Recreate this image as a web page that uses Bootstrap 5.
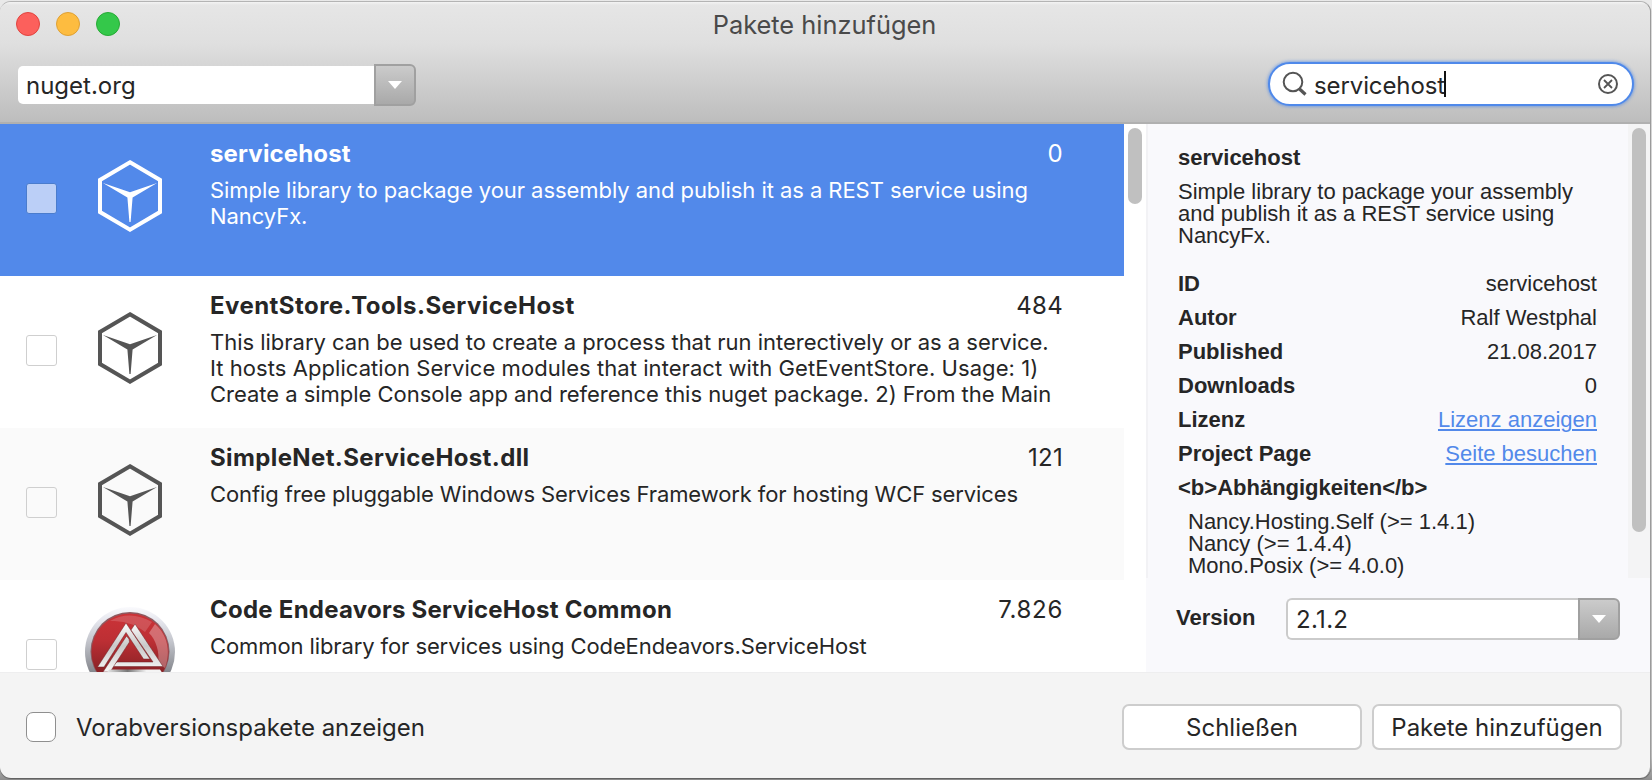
<!DOCTYPE html>
<html lang="de">
<head>
<meta charset="utf-8">
<title>Pakete hinzufügen</title>
<link href="https://cdn.jsdelivr.net/npm/bootstrap@5.3.0/dist/css/bootstrap.min.css" rel="stylesheet">
<style>
  html, body { height: 100%; }
  body { font-family: Inter, "Liberation Sans", sans-serif; color: #262626; background: linear-gradient(#e9e9e9, #c6c6c6 97%, #8e8e8e); overflow: hidden; padding-top: 1px; }
  .win { width: 1651px; height: 777px; background: #f4f4f4; border-radius: 11px; border-top: 1px solid #b4b4b4; border-right: 1px solid #9b9b9b; overflow: hidden; box-shadow: 0 1px 1px #5f5f5f; }
  .win-head { height: 122px; background: linear-gradient(#f4f4f4 0, #e6e6e6 3px, #dfdfdf 35%, #bdbdbd 100%); border-bottom: 2px solid #b0b0b0; padding: 8px 16px 0 18px; }
  .lights { margin-left: -2px; gap: 16px; width: 300px; margin-top: 2px; }
  .light { width: 24px; height: 24px; border: 1px solid; }
  .win-title { font-size: 25.4px; line-height: 30px; color: #4a4a4a; }
  .combo { height: 42px; font-size: 24px; }
  .combo-arrow { width: 42px; height: 42px; border: 2px solid #a0a0a0; border-radius: 0 6px 6px 0; background: linear-gradient(#cbcbcb, #a9a9a9); }
  .combo-src { width: 356px; height: 38px; background: #fff; border-radius: 5px 0 0 5px; line-height: 40px; padding-left: 8px; }
  .combo-ver { width: 292px; height: 42px; background: #fff; border: 2px solid #cbcbcb; border-right: 0; border-radius: 6px 0 0 6px; line-height: 39px; padding-left: 8px; letter-spacing: .3px; }
  .tools { margin-top: 24px; }
  .search { width: 366px; height: 44px; border: 2px solid #4f89ea; background: #fff; border-radius: 22px; font-size: 24px; box-shadow: 0 0 3px 1px rgba(79,137,234,.6); padding: 0 14px 0 11px; margin-top: -2px; }
  .search-text { line-height: 30px; margin: 3px 0 0 7px; letter-spacing: -.1px; }
  .caret-bar { width: 2px; height: 26px; background: #111; margin-left: -1px; }
  .main-area { height: 548px; }
  .pkg-list { width: 1124px; overflow: hidden; }
  .pkg { height: 152px; flex: none; padding-left: 26px; }
  .pkg.alt { background: #fafafa; }
  .pkg.active { background: #5289ea; color: #fff; }
  .tick { width: 31px; height: 31px; margin-top: 59px; border: 1px solid #cfcfcf; border-radius: 3px; background: #fff; flex: none; }
  .active .tick { background: #bbcff7; border-color: #4a7ccd; }
  .pkg-icon { width: 92px; height: 92px; margin: 26px 0 0 27px; flex: none; color: #555; }
  .active .pkg-icon { color: #fff; }
  .pkg-body { width: 853px; margin: 15px 0 0 34px; flex: none; }
  .pkg-name { font-size: 24px; line-height: 30px; font-weight: 700; letter-spacing: .25px; }
  .pkg-count { font-size: 24px; line-height: 30px; letter-spacing: .3px; }
  .pkg-desc { font-size: 22px; line-height: 26px; margin-top: 8px; white-space: nowrap; }
  .bar-l { width: 22px; padding: 4px 4px 0; background: #fff; }
  .thumb { width: 14px; border-radius: 7px; background: #c0c0c0; }
  .pane { width: 504px; background: #f9f9fc; font-family: "Liberation Sans", Arial, sans-serif; font-size: 22px; line-height: 22px; }
  .pane-body { height: 454px; border-left: 2px solid #f2f2f5; }
  .info { padding: 23px 31px 0 30px; }
  .info a { color: #5289ea; text-decoration-thickness: 1.5px; text-underline-offset: 2px; }
  .rows { margin-top: 26px; gap: 12px; }
  .bar-r { width: 22px; background: #f4f4f5; padding: 4px 4px 0; }
  .ver-row { padding: 20px 30px 0; }
  .ver-row .fw-bold { margin-top: 9px; }
  .ver-row .combo { font-family: Inter, sans-serif; }
  .foot { border-top: 1px solid #eeeeef; padding: 31px 28px 0 26px; height: 106px; font-size: 24px; }
  .foot-check { width: 30px; height: 30px; border: 1px solid #8f8f8f; border-radius: 7px; background: #fff; margin-top: 8px; }
  .foot-label { margin: 8px 0 0 20px; line-height: 32px; }
  .mac-btn { height: 46px; border: 2px solid #cdcdcd; border-radius: 7px; background: #fff; font-size: 24px; line-height: 30px; padding: 2px 0 0; color: #262626; }
</style>
</head>
<body>
<svg width="0" height="0" class="position-absolute">
  <symbol id="cube" viewBox="0 0 92 92">
    <path d="M46 12.300 76 30v32L46 79.700 16 62V30z" fill="none" stroke="currentColor" stroke-width="4"/>
    <path d="M19 33 46 42.200 73 33 48.600 47.500 46.600 72h-1.200L43.400 47.500z" fill="currentColor"/>
  </symbol>
  <symbol id="down" viewBox="0 0 14 8"><path d="M0 0h14L7 8z" fill="#fff"/></symbol>
</svg>
<div class="win d-flex flex-column">
  <header class="win-head">
    <div class="d-flex align-items-start">
      <div class="lights d-flex">
        <span class="light rounded-circle" style="background:#fc605c;border-color:#e0443f"></span>
        <span class="light rounded-circle" style="background:#fdbc40;border-color:#dea034"></span>
        <span class="light rounded-circle" style="background:#34c84a;border-color:#27aa35"></span>
      </div>
      <div class="win-title flex-grow-1 text-center" style="margin-right:301px">Pakete hinzufügen</div>
    </div>
    <div class="tools d-flex justify-content-between">
      <div class="combo d-flex align-items-center">
        <div class="combo-src">nuget.org</div>
        <div class="combo-arrow d-flex align-items-center justify-content-center"><svg width="14" height="8"><use href="#down"/></svg></div>
      </div>
      <div class="search d-flex align-items-center">
        <svg width="26" height="26" viewBox="0 0 26 26" fill="none" stroke="#555"><circle cx="12" cy="11" r="9.300" stroke-width="2"/><path d="M18 17.500 24.500 23.500" stroke-width="3.200"/></svg>
        <span class="search-text">servicehost</span><span class="caret-bar"></span>
        <svg class="ms-auto" width="20" height="20" viewBox="0 0 20 20" fill="none" stroke="#555"><circle cx="10" cy="10" r="9" stroke-width="2"/><path d="m6 6 8 8m0-8-8 8" stroke-width="1.800"/></svg>
      </div>
    </div>
  </header>
  <main class="main-area d-flex bg-white">
    <section class="pkg-list d-flex flex-column">
      <article class="pkg active d-flex">
        <span class="tick"></span><svg class="pkg-icon"><use href="#cube"/></svg>
        <div class="pkg-body"><div class="d-flex justify-content-between"><span class="pkg-name" style="letter-spacing:.15px">servicehost</span><span class="pkg-count">0</span></div>
        <div class="pkg-desc" style="letter-spacing:-.06px">Simple library to package your assembly and publish it as a REST service using<br>NancyFx.</div></div>
      </article>
      <article class="pkg d-flex">
        <span class="tick"></span><svg class="pkg-icon"><use href="#cube"/></svg>
        <div class="pkg-body"><div class="d-flex justify-content-between"><span class="pkg-name" style="letter-spacing:.45px">EventStore.Tools.ServiceHost</span><span class="pkg-count">484</span></div>
        <div class="pkg-desc"><span style="letter-spacing:-.02px">This library can be used to create a process that run interectively or as a service.</span><br><span style="letter-spacing:.06px">It hosts Application Service modules that interact with GetEventStore. Usage: 1)</span><br><span style="letter-spacing:-.03px">Create a simple Console app and reference this nuget package. 2) From the Main</span></div></div>
      </article>
      <article class="pkg alt d-flex">
        <span class="tick bg-transparent"></span><svg class="pkg-icon"><use href="#cube"/></svg>
        <div class="pkg-body"><div class="d-flex justify-content-between"><span class="pkg-name" style="letter-spacing:.38px">SimpleNet.ServiceHost.dll</span><span class="pkg-count">121</span></div>
        <div class="pkg-desc" style="letter-spacing:-.11px">Config free pluggable Windows Services Framework for hosting WCF services</div></div>
      </article>
      <article class="pkg d-flex">
        <span class="tick"></span>
        <svg class="pkg-icon" viewBox="0 0 92 92">
          <defs>
            <linearGradient id="rim" x2="0" y2="1"><stop offset="0" stop-color="#fafafd"/><stop offset=".15" stop-color="#e6e7ee"/><stop offset=".4" stop-color="#c0c2c9"/><stop offset=".75" stop-color="#808288"/></linearGradient>
            <linearGradient id="red" x2="0" y2="1"><stop offset="0" stop-color="#cb3338"/><stop offset=".35" stop-color="#bd2f34"/><stop offset=".75" stop-color="#8a2226"/></linearGradient>
            <linearGradient id="steel" gradientUnits="userSpaceOnUse" x1="0" y1="16" x2="0" y2="64"><stop offset="0" stop-color="#fff"/><stop offset=".5" stop-color="#c9c9c9"/><stop offset="1" stop-color="#f4f4f4"/></linearGradient>
            <linearGradient id="base" gradientUnits="userSpaceOnUse" x1="22" y1="0" x2="76" y2="0"><stop offset="0" stop-color="#eee"/><stop offset=".4" stop-color="#777"/><stop offset=".75" stop-color="#f4f4f4"/></linearGradient>
          </defs>
          <circle cx="46" cy="46" r="45" fill="url(#rim)"/>
          <circle cx="46" cy="45.500" r="39.500" fill="#8d5a60"/>
          <circle cx="46" cy="46" r="38.500" fill="url(#red)"/>
          <path d="M26 15C40 7 54 8 68 16L61 26C50 17 38 15 26 15z" fill="#fff" opacity=".16"/>
          <path d="M71 18C84 29 87 47 81 62L74 58C76 46 72 34 65 27z" fill="#fff" opacity=".3"/>
          <g fill="url(#steel)" stroke="#6e2226" stroke-width=".5">
            <path d="M42 17 13.500 61h6.500L42 26.500 59.500 53h6.500z"/>
            <path d="M47 24 51 18 79 60.500H27.500l5.500-4.500h36z"/>
            <path d="M45 33 42.500 30 19 66h7L45.500 36z"/>
          </g>
          <path d="M25 63.500h51l2 3H23z" fill="url(#base)"/>
        </svg>
        <div class="pkg-body"><div class="d-flex justify-content-between"><span class="pkg-name">Code Endeavors ServiceHost Common</span><span class="pkg-count" style="letter-spacing:.7px">7.826</span></div>
        <div class="pkg-desc" style="letter-spacing:-.1px">Common library for services using CodeEndeavors.ServiceHost</div></div>
      </article>
    </section>
    <div class="bar-l"><div class="thumb" style="height:76px"></div></div>
    <aside class="pane">
      <div class="pane-body d-flex">
        <div class="info flex-grow-1">
          <div class="fw-bold">servicehost</div>
          <div style="margin-top:12px" class="text-nowrap">Simple library to package your assembly<br>and publish it as a REST service using<br>NancyFx.</div>
          <div class="rows d-flex flex-column">
            <div class="d-flex justify-content-between"><b>ID</b><span>servicehost</span></div>
            <div class="d-flex justify-content-between"><b>Autor</b><span>Ralf Westphal</span></div>
            <div class="d-flex justify-content-between"><b>Published</b><span>21.08.2017</span></div>
            <div class="d-flex justify-content-between"><b>Downloads</b><span>0</span></div>
            <div class="d-flex justify-content-between"><b>Lizenz</b><a href="#">Lizenz anzeigen</a></div>
            <div class="d-flex justify-content-between"><b>Project Page</b><a href="#">Seite besuchen</a></div>
            <b>&lt;b&gt;Abhängigkeiten&lt;/b&gt;</b>
            <div style="padding-left:10px">Nancy.Hosting.Self (&gt;= 1.4.1)<br>Nancy (&gt;= 1.4.4)<br>Mono.Posix (&gt;= 4.0.0)</div>
          </div>
        </div>
        <div class="bar-r"><div class="thumb" style="height:404px"></div></div>
      </div>
      <div class="ver-row d-flex justify-content-between">
        <span class="fw-bold">Version</span>
        <div class="combo d-flex">
          <div class="combo-ver">2.1.2</div>
          <div class="combo-arrow d-flex align-items-center justify-content-center"><svg width="14" height="8"><use href="#down"/></svg></div>
        </div>
      </div>
    </aside>
  </main>
  <footer class="foot d-flex align-items-start">
    <span class="foot-check"></span>
    <span class="foot-label">Vorabversionspakete anzeigen</span>
    <button class="btn mac-btn ms-auto" style="width:240px">Schließen</button>
    <button class="btn mac-btn" style="width:250px;margin-left:10px">Pakete hinzufügen</button>
  </footer>
</div>
<script src="https://cdn.jsdelivr.net/npm/bootstrap@5.3.0/dist/js/bootstrap.bundle.min.js"></script>
</body>
</html>
